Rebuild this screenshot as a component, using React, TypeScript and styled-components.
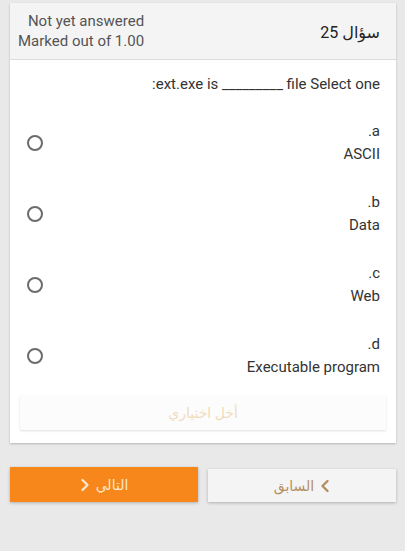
import React from "react";
import styled, { createGlobalStyle } from "styled-components";

const Global = createGlobalStyle`
  html, body { margin: 0; padding: 0; background: #e9e9e9; }
  body { font-family: Roboto, "DejaVu Sans", sans-serif; }
`;

const Page = styled.div`
  padding: 3px 9px 0 10px;
  min-height: 548px;
`;

const Card = styled.div`
  background: #fff;
  box-shadow: 0 1px 2px rgba(0, 0, 0, 0.22);
  padding-bottom: 13px;
`;

const Header = styled.div`
  display: flex;
  flex-direction: row-reverse;
  justify-content: space-between;
  align-items: center;
  height: 56px;
  background: #f4f4f4;
  border-bottom: 1px solid #dcdcdc;
  padding: 0 16px 0 8px;
`;

const QTitle = styled.div`
  direction: rtl;
  font-size: 16px;
  color: #222;
  margin-top: 2px;
`;

const Status = styled.div`
  text-align: right;
  font-size: 15px;
  line-height: 20px;
  color: #555;
`;

const Body = styled.div`
  padding: 14px 16px 0 10px;
`;

const QText = styled.div`
  text-align: right;
  font-size: 15px;
  line-height: 20px;
  color: #333;
  white-space: pre;
  margin-bottom: 25px;
`;

const Options = styled.div`
  display: flex;
  flex-direction: column;
  gap: 23px;
`;

const Option = styled.div`
  display: flex;
  align-items: center;
  justify-content: space-between;
  height: 48px;
`;

const Radio = styled.span`
  width: 12px;
  height: 12px;
  border: 2px solid #6b6b6b;
  border-radius: 50%;
  margin-left: 7px;
`;

const OptionText = styled.div`
  text-align: right;
  font-size: 15px;
  line-height: 23px;
  color: #333;
`;

const ClearButton = styled.div`
  margin-top: 15px;
  margin-right: -6px;
  height: 35px;
  display: flex;
  align-items: center;
  justify-content: center;
  background: #fcfcfc;
  box-shadow: 0 1px 2px rgba(0, 0, 0, 0.12);
  color: #f0dcbc;
  font-size: 14px;
  direction: rtl;
`;

const Nav = styled.div`
  direction: rtl;
  display: grid;
  grid-template-columns: 1fr 1fr;
  gap: 10px;
  margin-top: 24px;
`;

const NavButton = styled.div<{ $primary?: boolean }>`
  display: flex;
  align-items: center;
  justify-content: center;
  gap: 6px;
  font-size: 14px;
  background: ${(p) => (p.$primary ? "#f7861b" : "#f4f4f4")};
  color: ${(p) => (p.$primary ? "#fbe6c9" : "#b48f63")};
  box-shadow: 0 1px 3px rgba(0, 0, 0, 0.25);
  margin-top: ${(p) => (p.$primary ? "0" : "2px")};
  height: ${(p) => (p.$primary ? "35px" : "33px")};
`;

const Chevron = ({ dir, color }: { dir: "left" | "right"; color: string }) => (
  <svg width="10" height="14" viewBox="0 0 10 14">
    <path
      d={dir === "left" ? "M7.5 2 L2.5 7 L7.5 12" : "M2.5 2 L7.5 7 L2.5 12"}
      fill="none"
      stroke={color}
      strokeWidth="2.4"
      strokeLinecap="round"
      strokeLinejoin="round"
    />
  </svg>
);

const options = [
  { l: ".a", t: "ASCII" },
  { l: ".b", t: "Data" },
  { l: ".c", t: "Web" },
  { l: ".d", t: "Executable program" },
];

export default function App() {
  return (
    <>
      <Global />
      <Page>
        <Card>
          <Header>
            <QTitle>سؤال 25</QTitle>
            <Status>
              <div>Not yet answered</div>
              <div>Marked out of 1.00</div>
            </Status>
          </Header>
          <Body>
            <QText>{":ext.exe is _________ file Select one"}</QText>
            <Options>
              {options.map((o) => (
                <Option key={o.l}>
                  <Radio />
                  <OptionText>
                    <div>{o.l}</div>
                    <div>{o.t}</div>
                  </OptionText>
                </Option>
              ))}
            </Options>
            <ClearButton>أخل اختياري</ClearButton>
          </Body>
        </Card>
        <Nav>
          <NavButton>
            <Chevron dir="left" color="#b48f63" />
            <span>السابق</span>
          </NavButton>
          <NavButton $primary>
            <span>التالي</span>
            <Chevron dir="right" color="#fbe6c9" />
          </NavButton>
        </Nav>
      </Page>
    </>
  );
}
